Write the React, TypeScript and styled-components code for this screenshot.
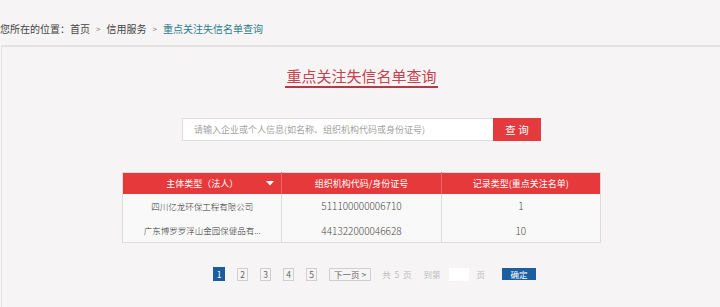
import React from "react";
import styled, { createGlobalStyle } from "styled-components";

const Global = createGlobalStyle`
  html, body { margin: 0; padding: 0; background: #f6f4f5; }
  body { font-family: "Noto Sans CJK SC", "Noto Sans", sans-serif; overflow: hidden; }
  * { box-sizing: border-box; }
`;

const Page = styled.div`
  width: 720px;
  height: 307px;
  display: flex;
  flex-direction: column;
  background: #f6f4f5;
`;

const Crumbs = styled.div`
  height: 45px;
  display: flex;
  align-items: center;
  padding-top: 11px;
  font-size: 10px;
  color: #444;
  white-space: pre;
`;

const CrumbSep = styled.span`
  color: #777;
  font-size: 8px;
  margin: 0 6px;
`;

const CrumbCurrent = styled.span`
  color: #2f7c8b;
`;

const Panel = styled.section`
  flex: 1;
  margin-left: 1px;
  border-top: 2px solid #e3e1e2;
  border-left: 1px solid #e3e1e2;
  display: flex;
  flex-direction: column;
  align-items: center;
  padding-top: 20px;
`;

const Title = styled.h1`
  margin: 0;
  font-size: 15px;
  line-height: 17px;
  font-weight: 400;
  color: #c9414f;
  padding: 0 1px 2px;
  border-bottom: 2px solid #b53a47;
  margin-left: 1px;
`;

const SearchRow = styled.div`
  margin-top: 30px;
  display: flex;
  margin-left: 1px;
`;

const SearchInput = styled.input`
  width: 311px;
  height: 23px;
  border: 1px solid #dedede;
  border-right: none;
  background: #fff;
  padding: 0 11px;
  font-family: inherit;
  font-size: 9px;
  color: #333;
  outline: none;
  &::placeholder { color: #a3a3a3; }
`;

const SearchButton = styled.button`
  width: 48px;
  height: 23px;
  border: none;
  background: #e23a3d;
  color: #fff;
  font-family: inherit;
  font-size: 10.5px;
  padding: 0;
  white-space: pre;
`;

const Table = styled.table`
  margin-top: 31px;
  width: 479px;
  border-collapse: collapse;
  table-layout: fixed;
  border: 1px solid #dcdcdc;
  margin-left: 1px;
`;

const HeadCell = styled.th`
  position: relative;
  height: 21px;
  padding: 0;
  background: #e5393c;
  color: #fff;
  font-size: 9px;
  font-weight: 400;
  text-align: center;
  border-left: 1px solid #ec6a6c;
  &:first-child { border-left: none; }
`;

const Caret = styled.svg`
  position: absolute;
  right: 7px;
  top: 8px;
`;

const Cell = styled.td<{ $num?: boolean }>`
  height: 24.5px;
  padding: 0 4px;
  background: #faf9f9;
  color: ${(p) => (p.$num ? "#4a4a4a" : "#333")};
  font-size: ${(p) => (p.$num ? "10px" : "8.5px")};
  font-weight: 300;
  text-align: center;
  white-space: nowrap;
  overflow: hidden;
  border-left: 1px solid #dcdcdc;
  &:first-child { border-left: none; }
`;

const Pager = styled.div`
  margin-top: 24px;
  width: 479px;
  margin-left: 1px;
  padding-left: 91px;
  display: flex;
  align-items: center;
  font-size: 9px;
  height: 14px;
`;

const PageBox = styled.span<{ $active?: boolean; $ml?: number; $wide?: boolean }>`
  display: inline-flex;
  align-items: center;
  justify-content: center;
  min-width: ${(p) => (p.$active ? 12 : 11)}px;
  height: ${(p) => (p.$active ? 14 : 13)}px;
  padding: 0 ${(p) => (p.$wide ? 4 : 2)}px;
  margin-left: ${(p) => p.$ml ?? 0}px;
  border: 1px solid ${(p) => (p.$active ? "#1b5c9c" : "#cfcfcf")};
  background: ${(p) => (p.$active ? "#1b5c9c" : "transparent")};
  color: ${(p) => (p.$active ? "#fff" : "#666")};
  font-size: 8.5px;
  line-height: 1;
`;

const Muted = styled.span<{ $ml?: number }>`
  margin-left: ${(p) => p.$ml ?? 0}px;
  color: #bdbdbd;
  font-size: 8.5px;
  white-space: pre;
`;

const JumpInput = styled.span`
  margin-left: 9px;
  width: 20px;
  height: 13px;
  background: #fff;
`;

const ConfirmButton = styled.span`
  margin-left: 17px;
  width: 34px;
  height: 12px;
  display: inline-flex;
  align-items: center;
  justify-content: center;
  background: #1d5e9f;
  color: #fff;
  font-size: 8.5px;
`;

const rows = [
  { name: "四川亿龙环保工程有限公司", code: "511100000006710", type: "1" },
  { name: "广东博罗罗浮山金园保健品有...", code: "441322000046628", type: "10" },
];

export default function App() {
  return (
    <Page>
      <Global />
      <Crumbs>
        您所在的位置：首页<CrumbSep>&gt;</CrumbSep>信用服务<CrumbSep>&gt;</CrumbSep>
        <CrumbCurrent>重点关注失信名单查询</CrumbCurrent>
      </Crumbs>
      <Panel>
        <Title>重点关注失信名单查询</Title>
        <SearchRow>
          <SearchInput placeholder="请输入企业或个人信息(如名称、组织机构代码或身份证号)" />
          <SearchButton>查 询</SearchButton>
        </SearchRow>
        <Table>
          <thead>
            <tr>
              <HeadCell>
                主体类型（法人）
                <Caret width="8" height="5" viewBox="0 0 8 5">
                  <polygon points="0,0 8,0 4,4.5" fill="#fff" />
                </Caret>
              </HeadCell>
              <HeadCell>组织机构代码/身份证号</HeadCell>
              <HeadCell>记录类型(重点关注名单)</HeadCell>
            </tr>
          </thead>
          <tbody>
            {rows.map((r) => (
              <tr key={r.code}>
                <Cell>{r.name}</Cell>
                <Cell $num>{r.code}</Cell>
                <Cell $num>{r.type}</Cell>
              </tr>
            ))}
          </tbody>
        </Table>
        <Pager>
          <PageBox $active>1</PageBox>
          <PageBox $ml={12}>2</PageBox>
          <PageBox $ml={12}>3</PageBox>
          <PageBox $ml={12}>4</PageBox>
          <PageBox $ml={12}>5</PageBox>
          <PageBox $ml={12} $wide>下一页 &gt;</PageBox>
          <Muted $ml={11}>共  5  页</Muted>
          <Muted $ml={12}>到第</Muted>
          <JumpInput />
          <Muted $ml={7}>页</Muted>
          <ConfirmButton>确定</ConfirmButton>
        </Pager>
      </Panel>
    </Page>
  );
}
